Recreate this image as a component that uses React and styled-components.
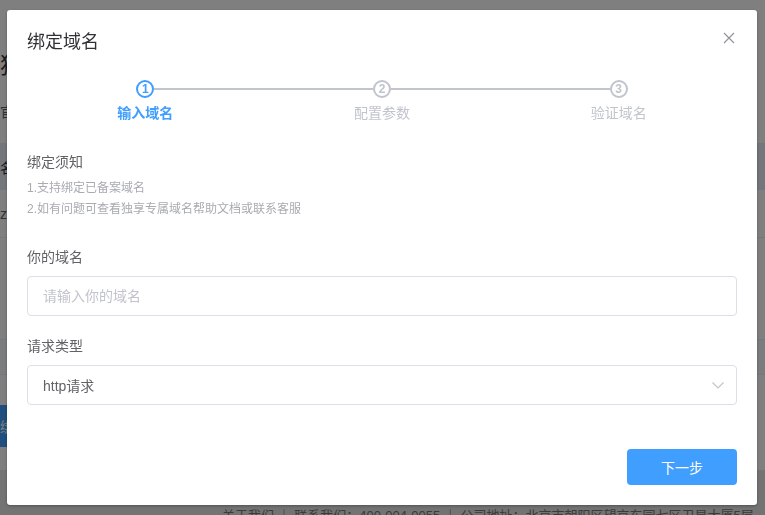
import React from 'react';
import styled, { createGlobalStyle, css } from 'styled-components';

const GlobalStyle = createGlobalStyle`
  html, body {
    margin: 0;
    padding: 0;
    overflow: hidden;
  }
  body {
    font-family: "Liberation Sans", "Noto Sans CJK SC", sans-serif;
    color: #606266;
  }
  * {
    box-sizing: border-box;
  }
`;

/* background page, seen through the mask */

const Page = styled.div`
  width: 765px;
  height: 515px;
  background: #fff;
  overflow: hidden;
  display: flex;
  flex-direction: column;

  & > * {
    flex-shrink: 0;
  }
`;

const PageHeading = styled.h1`
  margin: 52px 0 0;
  font-size: 22px;
  line-height: 28px;
  font-weight: normal;
  color: #303133;
`;

const PageSub = styled.p`
  margin: 22px 0 0;
  font-size: 14px;
  line-height: 20px;
  color: #606266;
`;

const TableHead = styled.div`
  margin-top: 21px;
  height: 47px;
  display: flex;
  align-items: center;
  background: #e7eef9;
  font-size: 14px;
  color: #303133;
`;

const TableRow = styled.div`
  height: ${(p) => p.$h}px;
  display: flex;
  align-items: center;
  border-bottom: 1px solid #ebeef5;
  background: ${(p) => p.$bg || '#fff'};
  font-size: 14px;
  color: #606266;
`;

const PageButton = styled.div`
  margin-top: 30px;
  width: 120px;
  height: 42px;
  display: flex;
  align-items: center;
  background: #409eff;
  color: #fff;
  font-size: 14px;
  border-radius: 0 4px 4px 0;
`;

const PageFooter = styled.div`
  margin-top: 23px;
  height: 70px;
  background: #e6e6e6;
  padding: 36px 0 0 222px;
  font-size: 13px;
  line-height: 20px;
  color: #777;
  white-space: nowrap;
`;

/* dialog */

const Mask = styled.div`
  position: fixed;
  inset: 0;
  padding-right: 1px;
  background: rgba(0, 0, 0, 0.5);
  display: flex;
  align-items: center;
  justify-content: center;
`;

const Dialog = styled.div`
  position: relative;
  width: 750px;
  background: #fff;
  border-radius: 3px;
  box-shadow: 0 1px 3px rgba(0, 0, 0, 0.3);
`;

const DialogHeader = styled.div`
  padding: 20px 20px 10px;
`;

const DialogTitle = styled.div`
  font-size: 18px;
  line-height: 24px;
  color: #303133;
`;

const CloseButton = styled.button`
  position: absolute;
  top: 22px;
  right: 22px;
  width: 12px;
  height: 12px;
  padding: 0;
  border: none;
  background: none;
  display: flex;
  cursor: pointer;
`;

const DialogBody = styled.div`
  padding: 0 20px;
`;

const Steps = styled.div`
  margin-top: 16px;
  display: grid;
  grid-template-columns: repeat(3, 1fr);
`;

const Step = styled.div`
  display: flex;
  flex-direction: column;
  align-items: center;
`;

const StepHead = styled.div`
  position: relative;
  width: 100%;
  height: 18px;
  display: flex;
  justify-content: center;

  ${(p) =>
    !p.$last &&
    css`
      &::after {
        content: '';
        position: absolute;
        top: 8px;
        left: calc(50% + 9px);
        right: calc(-50% + 9px);
        height: 2px;
        background: #c0c4cc;
      }
    `}
`;

const StepIcon = styled.div`
  width: 18px;
  height: 18px;
  border-radius: 50%;
  border: 2px solid ${(p) => (p.$active ? '#409eff' : '#c0c4cc')};
  color: ${(p) => (p.$active ? '#409eff' : '#c0c4cc')};
  background: #fff;
  display: flex;
  align-items: center;
  justify-content: center;
  font-size: 12px;
  font-weight: bold;
  line-height: 1;
`;

const StepTitle = styled.div`
  margin-top: 6px;
  font-size: 14px;
  line-height: 18px;
  color: ${(p) => (p.$active ? '#409eff' : '#c0c4cc')};
  font-weight: ${(p) => (p.$active ? 'bold' : 'normal')};
`;

const NoticeTitle = styled.div`
  margin-top: 30px;
  font-size: 14px;
  line-height: 20px;
  color: #606266;
`;

const NoticeList = styled.div`
  margin-top: 6px;
  font-size: 12px;
  line-height: 21px;
  color: #a8abb2;
`;

const FieldLabel = styled.div`
  margin-top: ${(p) => p.$gap}px;
  font-size: 14px;
  line-height: 20px;
  color: #606266;
`;

const fieldBox = css`
  margin-top: 9px;
  width: 100%;
  height: 40px;
  border: 1px solid #dcdfe6;
  border-radius: 4px;
  padding: 0 15px;
  font-family: "Liberation Sans", "Noto Sans CJK SC", sans-serif;
  font-size: 14px;
  color: #606266;
  background: #fff;
`;

const TextInput = styled.input`
  ${fieldBox};
  display: block;
  outline: none;

  &::placeholder {
    color: #c0c4cc;
  }
`;

const SelectBox = styled.div`
  ${fieldBox};
  display: flex;
  align-items: center;
  justify-content: space-between;
  padding-right: 12px;
  cursor: pointer;
`;

const DialogFooter = styled.div`
  padding: 44px 20px 20px;
  display: flex;
  justify-content: flex-end;
`;

const PrimaryButton = styled.button`
  width: 110px;
  height: 36px;
  border: none;
  border-radius: 4px;
  background: #409eff;
  color: #fff;
  font-family: "Liberation Sans", "Noto Sans CJK SC", sans-serif;
  font-size: 14px;
  cursor: pointer;
`;

const steps = ['输入域名', '配置参数', '验证域名'];
const active = 0;

const App = () => {
  return (
    <>
      <GlobalStyle />
      <Page>
        <PageHeading>独</PageHeading>
        <PageSub>官</PageSub>
        <TableHead>名</TableHead>
        <TableRow $h={48}>zw</TableRow>
        <TableRow $h={102} />
        <TableRow $h={35} $bg="#f7f8fa" />
        <PageButton>绑</PageButton>
        <PageFooter>
          关于我们 ｜ 联系我们：400-004-0055 ｜ 公司地址：北京市朝阳区望京东园七区卫星大厦5层
        </PageFooter>
      </Page>

      <Mask>
        <Dialog>
          <DialogHeader>
            <DialogTitle>绑定域名</DialogTitle>
          </DialogHeader>
          <CloseButton aria-label="关闭">
            <svg width="12" height="12" viewBox="0 0 12 12">
              <path d="M1 1 L11 11 M11 1 L1 11" stroke="#909399" strokeWidth="1.2" fill="none" />
            </svg>
          </CloseButton>

          <DialogBody>
            <Steps>
              {steps.map((title, i) => (
                <Step key={title}>
                  <StepHead $last={i === steps.length - 1}>
                    <StepIcon $active={i === active}>{i + 1}</StepIcon>
                  </StepHead>
                  <StepTitle $active={i === active}>{title}</StepTitle>
                </Step>
              ))}
            </Steps>

            <NoticeTitle>绑定须知</NoticeTitle>
            <NoticeList>
              <div>1.支持绑定已备案域名</div>
              <div>2.如有问题可查看独享专属域名帮助文档或联系客服</div>
            </NoticeList>

            <FieldLabel $gap={27}>你的域名</FieldLabel>
            <TextInput placeholder="请输入你的域名" />

            <FieldLabel $gap={20}>请求类型</FieldLabel>
            <SelectBox>
              <span>http请求</span>
              <svg width="12" height="7" viewBox="0 0 12 7">
                <path d="M0.5 0.5 L6 6 L11.5 0.5" stroke="#c0c4cc" strokeWidth="1.2" fill="none" />
              </svg>
            </SelectBox>
          </DialogBody>

          <DialogFooter>
            <PrimaryButton>下一步</PrimaryButton>
          </DialogFooter>
        </Dialog>
      </Mask>
    </>
  );
};

export default App;
